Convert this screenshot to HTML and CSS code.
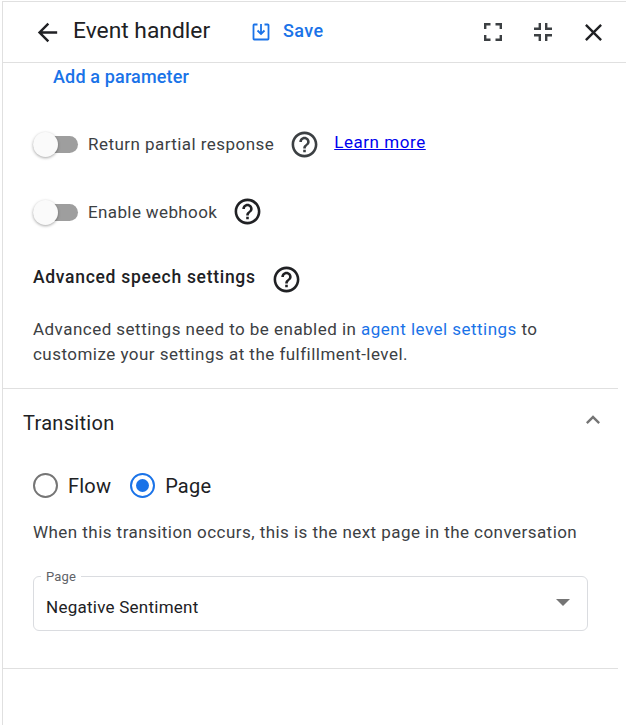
FILE: index.html
```html
<!DOCTYPE html>
<html lang="en">
<head>
<meta charset="utf-8">
<title>Event handler</title>
<link rel="stylesheet" href="styles.css">
</head>
<body>
<div class="panel">
  <header class="toolbar">
    <svg class="back" width="29" height="29" viewBox="0 0 24 24"><path d="M20 11H7.830l5.590-5.590L12 4l-8 8 8 8 1.410-1.410L7.830 13H20z"/></svg>
    <h1 class="title">Event handler</h1>
    <button class="save">
      <svg width="20" height="20" viewBox="0 0 20 20" fill="none" stroke="#1a73e8" stroke-width="1.800"><path d="M6.500 2.500H3.200a.7.7 0 0 0-.7.7v13.600c0 .4.3.7.7.7h13.600c.4 0 .7-.3.7-.7V3.200a.7.7 0 0 0-.7-.7h-3.300"/><path d="M10 2v9.500M6.500 8.500 10 12l3.500-3.500"/></svg>
      <span>Save</span>
    </button>
    <div class="tools">
      <svg width="24" height="24" viewBox="0 0 24 24" fill="#3c4043"><path d="M3 3h6.500v2.400H5.400v3.600H3zM14.500 3H21v6h-2.400V5.400h-4.100zM3 15h2.400v3.600h4.100V21H3zM18.600 15H21v6h-6.500v-2.400h4.100z"/></svg>
      <svg width="24" height="24" viewBox="0 0 24 24" fill="#3c4043"><path d="M7.600 3H10v7H3V7.600h4.600zM14 3h2.400v4.600H21V10h-7zM3 14h7v7H7.600v-4.600H3zM14 14h7v2.400h-4.600V21H14z"/></svg>
      <svg class="close" width="29" height="29" viewBox="0 0 24 24" fill="#202124"><path d="M19 6.410 17.590 5 12 10.590 6.410 5 5 6.410 10.590 12 5 17.590 6.410 19 12 13.410 17.590 19 19 17.590 13.410 12z"/></svg>
    </div>
  </header>

  <section class="upper">
    <a class="add-link">Add a parameter</a>

    <div class="toggle-row first">
      <span class="toggle"><span class="knob"></span></span>
      <span class="toggle-label">Return partial response</span>
      <svg class="help" width="31" height="31" viewBox="0 0 24 24"><path fill="#3c4043" d="M11 18h2v-2h-2v2zm1-16C6.480 2 2 6.480 2 12s4.480 10 10 10 10-4.480 10-10S17.520 2 12 2zm0 18c-4.410 0-8-3.590-8-8s3.590-8 8-8 8 3.590 8 8-3.590 8-8 8zm0-14c-2.210 0-4 1.790-4 4h2c0-1.100.9-2 2-2s2 .9 2 2c0 2-3 1.750-3 5h2c0-2.250 3-2.500 3-5 0-2.210-1.790-4-4-4z"/></svg>
      <a class="learn">Learn more</a>
    </div>

    <div class="toggle-row second">
      <span class="toggle"><span class="knob"></span></span>
      <span class="toggle-label webhook">Enable webhook</span>
      <svg class="help raised" width="31" height="31" viewBox="0 0 24 24"><path fill="#202124" d="M11 18h2v-2h-2v2zm1-16C6.480 2 2 6.480 2 12s4.480 10 10 10 10-4.480 10-10S17.520 2 12 2zm0 18c-4.410 0-8-3.590-8-8s3.590-8 8-8 8 3.590 8 8-3.590 8-8 8zm0-14c-2.210 0-4 1.790-4 4h2c0-1.100.9-2 2-2s2 .9 2 2c0 2-3 1.750-3 5h2c0-2.250 3-2.500 3-5 0-2.210-1.790-4-4-4z"/></svg>
    </div>

    <div class="speech-head">
      <h2 class="speech-title">Advanced speech settings</h2>
      <svg class="help" width="31" height="31" viewBox="0 0 24 24"><path fill="#202124" d="M11 18h2v-2h-2v2zm1-16C6.480 2 2 6.480 2 12s4.480 10 10 10 10-4.480 10-10S17.520 2 12 2zm0 18c-4.410 0-8-3.590-8-8s3.590-8 8-8 8 3.590 8 8-3.590 8-8 8zm0-14c-2.210 0-4 1.790-4 4h2c0-1.100.9-2 2-2s2 .9 2 2c0 2-3 1.750-3 5h2c0-2.250 3-2.500 3-5 0-2.210-1.790-4-4-4z"/></svg>
    </div>
    <p class="speech-text">Advanced settings need to be enabled in <a class="inline-link">agent level settings</a> to customize your settings at the fulfillment-level.</p>
  </section>

  <section class="transition">
    <div class="transition-head">
      <h2 class="transition-title">Transition</h2>
      <svg class="chevron" width="28" height="28" viewBox="0 0 24 24" fill="#757575"><path d="M12 8l-6 6 1.410 1.410L12 10.830l4.590 4.580L18 14z"/></svg>
    </div>
    <div class="radios">
      <span class="radio"></span><span class="radio-label">Flow</span>
      <span class="radio on"><span class="dot"></span></span><span class="radio-label">Page</span>
    </div>
    <p class="hint">When this transition occurs, this is the next page in the conversation</p>
    <div class="select">
      <span class="select-label">Page</span>
      <span class="select-value">Negative Sentiment</span>
      <span class="arrow"></span>
    </div>
  </section>
</div>
</body>
</html>
```

FILE: styles.css
```css
* { box-sizing: border-box; }
html, body { margin: 0; height: 100%; }
body { background: #fff; font-family: Roboto, "Liberation Sans", sans-serif; color: #202124; overflow: hidden; }
.panel { height: 725px; margin-left: 2px; border-left: 1px solid #e0e0e0; border-top: 1px solid #e0e0e0; margin-top: 1px; }
h1, h2, p { margin: 0; font-weight: 400; }
a { text-decoration: none; }

.toolbar { height: 61px; display: flex; align-items: center; border-bottom: 1px solid #e0e0e0; padding-left: 30px; }
.back { fill: #202124; flex: none; }
.title { font-size: 22.8px; line-height: 28px; margin: -2px 0 0 11px; color: #202124; width: 137px; white-space: nowrap; }
.save { display: flex; align-items: center; gap: 12px; margin-left: 41px; padding: 0; border: 0; background: none; font: 500 18px Roboto, sans-serif; letter-spacing: .4px; color: #1a73e8; }
.save span { margin-top: -3px; }
.tools { display: flex; align-items: center; gap: 26px; margin-left: 157px; }
.close { margin-left: -2px; }

.upper { height: 326px; padding-top: 4px; border-bottom: 1px solid #e0e0e0; margin-right: 8px; padding-left: 30px; }
.add-link { display: block; margin-left: 20px; font-size: 18px; line-height: 20px; font-weight: 500; letter-spacing: .15px; color: #1a73e8; }
.toggle-row { display: flex; align-items: center; height: 26px; }
.toggle-row.first { margin-top: 44px; }
.toggle-row.second { margin-top: 42px; }
.toggle { position: relative; display: block; width: 45px; height: 17px; border-radius: 9px; background: #9e9e9e; flex: none; }
.knob { position: absolute; left: 0; top: -4px; width: 25px; height: 25px; border-radius: 50%; background: #fafafa; box-shadow: 0 1px 3px rgba(0,0,0,.35); }
.toggle-label { margin-left: 10px; font-size: 17px; letter-spacing: .45px; color: #3c4043; white-space: nowrap; }
.toggle-label.webhook { letter-spacing: .38px; }
.help { flex: none; margin-left: 15px; }
.help.raised { margin-bottom: 2px; }
.learn { margin-left: 14px; margin-top: -4px; font-size: 17px; letter-spacing: .55px; color: #0000ee; text-decoration: underline; }
.speech-head { display: flex; align-items: center; height: 26px; margin-top: 41px; }
.speech-title { font-size: 17.5px; font-weight: 500; letter-spacing: .7px; color: #202124; margin-top: -5px; }
.speech-text { margin-top: 25px; width: 540px; font-size: 17px; line-height: 25px; letter-spacing: .47px; color: #3c4043; }
.inline-link { color: #1a73e8; }

.transition { height: 280px; border-bottom: 1px solid #e0e0e0; margin-right: 8px; padding-left: 20px; }
.transition-head { display: flex; align-items: center; justify-content: space-between; padding: 22px 11px 0 0; height: 46px; }
.transition-title { font-size: 20px; font-weight: 400; letter-spacing: .3px; color: #202124; }
.chevron { margin-bottom: 6px; }
.radios { display: flex; align-items: center; margin: 38px 0 0 10px; height: 25px; }
.radio { width: 25px; height: 25px; border-radius: 50%; border: 2px solid #757575; display: flex; align-items: center; justify-content: center; flex: none; }
.radio.on { border-color: #1a73e8; }
.dot { width: 13px; height: 13px; border-radius: 50%; background: #1a73e8; }
.radio-label { margin-left: 10px; margin-right: 19px; font-size: 20px; letter-spacing: .2px; color: #202124; }
.radio-label:last-child { margin-right: 0; }
.hint { margin: 22px 0 0 10px; font-size: 17px; line-height: 24px; letter-spacing: .45px; color: #3c4043; white-space: nowrap; }
.select { position: relative; display: flex; align-items: center; margin: 32px 0 0 10px; width: 555px; height: 55px; border: 1px solid #dadce0; border-radius: 6px; padding: 7px 12px 0; }
.select-label { position: absolute; left: 7px; top: -7px; padding: 0 5px; background: #fff; font-size: 13px; line-height: 14px; letter-spacing: .2px; color: #5f6368; }
.select-value { font-size: 17px; letter-spacing: .25px; color: #202124; }
.arrow { position: absolute; right: 17px; top: 22px; width: 0; height: 0; border-left: 7px solid transparent; border-right: 7px solid transparent; border-top: 7px solid #757575; }
```
